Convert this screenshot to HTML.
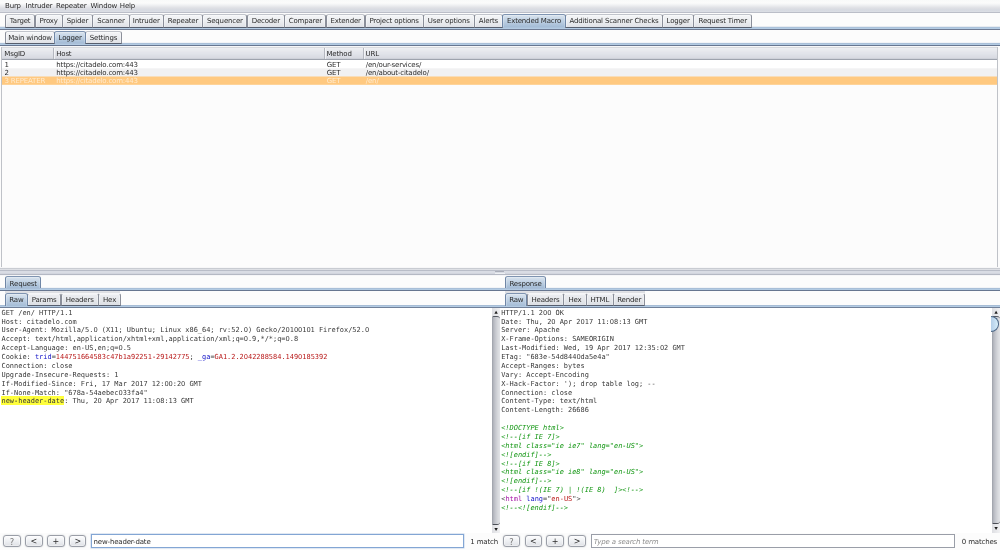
<!DOCTYPE html>
<html>
<head>
<meta charset="utf-8">
<title>Burp Suite</title>
<style>
html,body{margin:0;padding:0;}
body{width:1000px;height:550px;overflow:hidden;position:relative;background:#fcfcfc;
  font-family:"DejaVu Sans","Liberation Sans",sans-serif;font-size:7.0px;letter-spacing:-0.17px;color:#2b2b2b;}
*{box-sizing:border-box;}
.abs,#shapes div,#shapes svg{position:absolute;}
#shapes,#text{position:absolute;left:0;top:0;width:1000px;height:550px;overflow:hidden;}
#shapes{z-index:0;}
#text{will-change:transform;z-index:1;}
#text span.t{position:absolute;line-height:8px;white-space:nowrap;}
#text span.c{text-align:center;}
#menubar{left:0;top:0;width:1000px;height:12.8px;
  background:linear-gradient(#f8f9f9 0%,#fbfbfb 25%,#f0f1f3 42%,#dfe0e5 65%,#d6d9e1 84%,#dcdfe5 100%);border-bottom:0.8px solid #bbbec8;}
.tab{border:0.75px solid #8b8f9a;border-top-color:#c1c4cb;border-bottom:0.8px solid #565e6e;
  border-radius:2.6px 2.6px 0 0;
  background:linear-gradient(#f4f5f7 0%,#eceef1 50%,#dfe1e6 100%);
  box-shadow:inset 0.5px 0.6px 0 rgba(255,255,255,0.75),inset -0.5px 0 0 rgba(255,255,255,0.6);}
.tab.sel{background:linear-gradient(#dae4ee 0%,#c2d3e5 42%,#a4bcd6 100%);border-color:#6f86a6;border-top-color:#7f94b1;border-bottom:none;z-index:2;
  box-shadow:inset 0.5px 0.6px 0 rgba(255,255,255,0.45),inset -0.5px 0 0 rgba(255,255,255,0.35);}
.tab.r4:not(.sel){background:linear-gradient(#ecedf1 0%,#e6e8ec 50%,#dcdfe4 100%);border-top-color:#f6f6f8;}
.bline{left:0;width:1000px;height:2.9px;
  background:linear-gradient(#9aadc7 0,#a3b7d0 0.5px,#b0c7df 0.6px,#b8cde3 2.0px,#5c6a84 2.1px,#64728c 2.9px);}
#tbl{left:1.4px;top:46.8px;width:996.8px;height:221.7px;border:0.7px solid #b1b4bb;border-top-color:#c6c9cf;border-bottom-color:#cdd0d5;border-radius:1.2px;background:#fff;overflow:hidden;}
#thead{left:0;top:0;width:995.4px;height:12.4px;
  background:linear-gradient(#f3f4f7 0%,#e8eaee 50%,#d8dbe1 100%);border-bottom:0.7px solid #a3a7af;}
.th{top:0;height:11.7px;border-left:0.6px solid #b9bcc3;box-shadow:inset 0.6px 0 0 #f4f5f7;}
.tr{left:0;width:995.4px;height:8.2px;}
.pane{position:absolute;font-family:"DejaVu Sans Mono","Liberation Mono",monospace;
  font-size:6.94px;line-height:8.87px;letter-spacing:0;white-space:pre;overflow:hidden;color:#383838;}
.z{font-family:"DejaVu Sans","Liberation Sans",sans-serif;font-size:6.7px;display:inline-block;width:4.178px;text-align:center;line-height:8px;vertical-align:baseline;}
.b{color:#1414c8;} .r{color:#b81818;} .g{color:#129612;font-style:italic;} .m{color:#a513a5;}
.sb{width:8px;background:linear-gradient(90deg,#9a9da6 0,#aeb1b9 1px,#c2c4cb 3px,#d8dade 6px,#e2e3e7 8px);}
.sbtn{width:8px;background:linear-gradient(90deg,#dddee2,#f1f1f3);}
.btn{top:535px;height:12px;width:17.4px;border:1px solid #9a9ea7;border-radius:3px;
  background:linear-gradient(#fdfdfe 0%,#eef0f3 50%,#dfe1e6 100%);box-shadow:0 0 1.2px rgba(110,116,128,0.55),inset 0 0 0 0.6px rgba(255,255,255,0.7);}
.tf{top:534px;height:14.4px;background:#fff;border:0.7px solid #9a9ea8;}
</style>
</head>
<body>
<div id="shapes">
<div id="menubar"></div>
<div style="left:0px;top:26px;width:1000px;height:4px;background:linear-gradient(#e8ecf1 0px,#e8ecf1 1px,#abc2db 1px,#abc2db 2px,#b3cbe3 2px,#b3cbe3 3px,#6f7b93 3px,#6f7b93 4px);"></div>
<div class="tab" style="left:4.95px;top:14.30px;width:30.40px;height:13.30px"></div>
<div class="tab" style="left:34.65px;top:14.30px;width:27.95px;height:13.30px"></div>
<div class="tab" style="left:61.90px;top:14.30px;width:31.05px;height:13.30px"></div>
<div class="tab" style="left:92.25px;top:14.30px;width:37.30px;height:13.30px"></div>
<div class="tab" style="left:128.85px;top:14.30px;width:34.80px;height:13.30px"></div>
<div class="tab" style="left:162.95px;top:14.30px;width:40.10px;height:13.30px"></div>
<div class="tab" style="left:202.35px;top:14.30px;width:45.10px;height:13.30px"></div>
<div class="tab" style="left:246.75px;top:14.30px;width:38.20px;height:13.30px"></div>
<div class="tab" style="left:284.25px;top:14.30px;width:42.20px;height:13.30px"></div>
<div class="tab" style="left:325.75px;top:14.30px;width:39.70px;height:13.30px"></div>
<div class="tab" style="left:364.75px;top:14.30px;width:58.80px;height:13.30px"></div>
<div class="tab" style="left:422.85px;top:14.30px;width:51.80px;height:13.30px"></div>
<div class="tab" style="left:473.95px;top:14.30px;width:29.00px;height:13.30px"></div>
<div class="tab sel" style="left:502.25px;top:14.00px;width:63.60px;height:13.40px"></div>
<div class="tab" style="left:565.15px;top:14.30px;width:97.70px;height:13.30px"></div>
<div class="tab" style="left:662.15px;top:14.30px;width:32.00px;height:13.30px"></div>
<div class="tab" style="left:693.45px;top:14.30px;width:58.60px;height:13.30px"></div>
<div style="left:0px;top:42px;width:1000px;height:4px;background:linear-gradient(#f2f4f7 0px,#f2f4f7 1px,#a9bfd8 1px,#a9bfd8 2px,#b3cbe3 2px,#b3cbe3 3px,#677690 3px,#677690 4px);"></div>
<div class="tab" style="left:4.95px;top:31.20px;width:50.20px;height:12.50px"></div>
<div class="tab sel" style="left:54.45px;top:30.90px;width:31.35px;height:12.60px"></div>
<div class="tab" style="left:85.10px;top:31.20px;width:36.75px;height:12.50px"></div>
<div style="left:1px;top:47px;width:997px;height:221px;background:#fcfcfc;border-left:1px solid #bfc2c8;border-right:1px solid #bfc2c8"></div>
<div style="left:2px;top:46px;width:995px;height:39px;background:linear-gradient(#f7f7f8 0px,#f7f7f8 1px,#d8dade 1px,#d8dade 2px,#edeef2 2px,#edeef2 3px,#eaecf0 3px,#eaecf0 4px,#e8eaee 4px,#e8eaee 5px,#e6e7ec 5px,#e6e7ec 6px,#e3e5eb 6px,#e3e5eb 7px,#e2e4ea 7px,#e2e4ea 8px,#dfe2e8 8px,#dfe2e8 9px,#dddfe6 9px,#dddfe6 10px,#dbdde4 10px,#dbdde4 11px,#d9dbe2 11px,#d9dbe2 12px,#ced1d9 12px,#ced1d9 13px,#9ea3ad 13px,#9ea3ad 14px,#ffffff 14px,#ffffff 15px,#ffffff 15px,#ffffff 16px,#ffffff 16px,#ffffff 17px,#ffffff 17px,#ffffff 18px,#ffffff 18px,#ffffff 19px,#ffffff 19px,#ffffff 20px,#ffffff 20px,#ffffff 21px,#ffffff 21px,#ffffff 22px,#f5f5f6 22px,#f5f5f6 23px,#f1f1f2 23px,#f1f1f2 24px,#f1f1f2 24px,#f1f1f2 25px,#f1f1f2 25px,#f1f1f2 26px,#f1f1f2 26px,#f1f1f2 27px,#f1f1f2 27px,#f1f1f2 28px,#f1f1f2 28px,#f1f1f2 29px,#f1f1f2 29px,#f1f1f2 30px,#f8ddb9 30px,#f8ddb9 31px,#ffc980 31px,#ffc980 32px,#ffc980 32px,#ffc980 33px,#ffc980 33px,#ffc980 34px,#ffc980 34px,#ffc980 35px,#ffc980 35px,#ffc980 36px,#ffc980 36px,#ffc980 37px,#ffc980 37px,#ffc980 38px,#fed399 38px,#fed399 39px);"></div>
<div style="left:53px;top:48px;width:1px;height:11px;background:#b4b7bf"></div>
<div style="left:54px;top:48px;width:1px;height:11px;background:rgba(255,255,255,0.6)"></div>
<div style="left:324px;top:48px;width:1px;height:11px;background:#b4b7bf"></div>
<div style="left:325px;top:48px;width:1px;height:11px;background:rgba(255,255,255,0.6)"></div>
<div style="left:363px;top:48px;width:1px;height:11px;background:#b4b7bf"></div>
<div style="left:364px;top:48px;width:1px;height:11px;background:rgba(255,255,255,0.6)"></div>
<div style="left:0px;top:267px;width:1000px;height:9px;background:linear-gradient(#f7f7f8 0px,#f7f7f8 1px,#c9ccd2 1px,#c9ccd2 2px,#dee0e5 2px,#dee0e5 3px,#b9bdc8 3px,#b9bdc8 4px,#d9dce4 4px,#d9dce4 5px,#d9dce4 5px,#d9dce4 6px,#d2d5de 6px,#d2d5de 7px,#b5b9c4 7px,#b5b9c4 8px,#f6f6f8 8px,#f6f6f8 9px);"></div>
<div style="left:495.4px;top:271px;width:9px;height:1.4px;background:#a9adb8"></div>
<div style="left:495px;top:273px;width:10px;height:1px;background:#eef0f3"></div>
<div style="left:0px;top:287px;width:1000px;height:4px;background:linear-gradient(#f2f4f7 0px,#f2f4f7 1px,#a9bfd8 1px,#a9bfd8 2px,#b3cbe3 2px,#b3cbe3 3px,#677690 3px,#677690 4px);"></div>
<div class="tab sel" style="left:5.05px;top:276.40px;width:36.40px;height:12.10px"></div>
<div class="tab sel" style="left:505.05px;top:276.40px;width:41.10px;height:12.10px"></div>
<div style="left:0px;top:305px;width:1000px;height:4px;background:linear-gradient(#a6bcd5 0px,#a6bcd5 1px,#b3cbe3 1px,#b3cbe3 2px,#708099 2px,#708099 3px,#eceef0 3px,#eceef0 4px);"></div>
<div style="left:5px;top:291px;width:115px;height:3px;background:linear-gradient(#e0e1e5 0px,#e0e1e5 1px,#dddee2 1px,#dddee2 2px,#f3f3f4 2px,#f3f3f4 3px);"></div>
<div style="left:505px;top:291px;width:140px;height:3px;background:linear-gradient(#e0e1e5 0px,#e0e1e5 1px,#dddee2 1px,#dddee2 2px,#f3f3f4 2px,#f3f3f4 3px);"></div>
<div class="tab r4 sel" style="left:5.05px;top:293.00px;width:22.65px;height:12.60px"></div>
<div class="tab r4" style="left:27.00px;top:293.30px;width:34.35px;height:12.50px"></div>
<div class="tab r4" style="left:60.65px;top:293.30px;width:38.20px;height:12.50px"></div>
<div class="tab r4" style="left:98.15px;top:293.30px;width:22.90px;height:12.50px"></div>
<div class="tab r4 sel" style="left:505.05px;top:293.00px;width:22.40px;height:12.60px"></div>
<div class="tab r4" style="left:526.75px;top:293.30px;width:37.30px;height:12.50px"></div>
<div class="tab r4" style="left:563.35px;top:293.30px;width:23.30px;height:12.50px"></div>
<div class="tab r4" style="left:585.95px;top:293.30px;width:27.80px;height:12.50px"></div>
<div class="tab r4" style="left:613.05px;top:293.30px;width:32.30px;height:12.50px"></div>
<div style="left:0;top:307.8px;width:492.2px;height:225.2px;background:#fff"></div>
<div style="left:1.4px;top:396.2px;width:62.8px;height:8.8px;background:#ffff3c"></div>
<div class="sbtn" style="left:492.0px;top:307.9px;width:8.2px;height:8.2px"></div>
<div class="sbtn" style="left:492.0px;top:524.6px;width:8.2px;height:8.6px"></div>
<div class="sb" style="left:492.0px;top:316.09999999999997px;width:8.2px;height:208.50px;border-radius:1.5px 3px 3px 1.5px;border-top:0.9px solid #555962;border-bottom:1.2px solid #4a4d55"></div>
<svg style="left:492.0px;top:307.9px" width="8.2" height="8.2" viewBox="0 0 8.2 8.2"><path d="M2.4 5.8 L4.1 2.7 L5.8 5.8 Z" fill="#1e1e1e"/></svg>
<svg style="left:492.0px;top:524.6px" width="8.2" height="8.6" viewBox="0 0 8.2 8.6"><path d="M2.4 2.9 L5.8 2.9 L4.1 5.9 Z" fill="#1e1e1e"/></svg>
<div style="left:500px;top:307.8px;width:492px;height:225px;background:#fff"></div>
<div class="sbtn" style="left:991.8px;top:307.9px;width:8.2px;height:8.2px"></div>
<div class="sbtn" style="left:991.8px;top:524.0px;width:8.2px;height:8.6px"></div>
<div class="sb" style="left:991.8px;top:316.09999999999997px;width:8.2px;height:207.90px;border-radius:1.5px 3px 3px 1.5px;border-top:0.9px solid #555962;border-bottom:1.2px solid #4a4d55"></div>
<svg style="left:991.8px;top:307.9px" width="8.2" height="8.2" viewBox="0 0 8.2 8.2"><path d="M2.4 5.8 L4.1 2.7 L5.8 5.8 Z" fill="#1e1e1e"/></svg>
<svg style="left:991.8px;top:524.0px" width="8.2" height="8.6" viewBox="0 0 8.2 8.6"><path d="M2.4 2.9 L5.8 2.9 L4.1 5.9 Z" fill="#1e1e1e"/></svg>
<div style="left:991.1999999999999px;top:316.1px;width:8.299999999999999px;height:15.899999999999977px;border:0.8px solid #4b6686;border-left:none;border-radius:0 100% 100% 0 / 0 50% 50% 0;background:linear-gradient(90deg,#b5cfe8,#c4ddf1 50%,#d8eef9)"></div>
<div class="btn" style="left:3.30px"></div>
<div class="btn" style="left:25.20px"></div>
<div class="btn" style="left:47.15px"></div>
<div class="btn" style="left:69.10px"></div>
<div class="btn" style="left:502.60px"></div>
<div class="btn" style="left:524.50px"></div>
<div class="btn" style="left:546.45px"></div>
<div class="btn" style="left:568.40px"></div>
<div class="tf" style="left:91px;width:373px;border:1px solid #83a6d4;box-shadow:0 0 0 0.5px rgba(150,180,220,0.55)"></div>
<div class="tf" style="left:591px;width:363.5px"></div>
</div>
<div id="text">
<span class="t" style="left:5.00px;top:2px;">Burp</span>
<span class="t" style="left:25.50px;top:2px;">Intruder</span>
<span class="t" style="left:56.00px;top:2px;">Repeater</span>
<span class="t" style="left:90.50px;top:2px;">Window</span>
<span class="t" style="left:119.80px;top:2px;">Help</span>
<span class="t c" style="left:4.95px;top:17px;width:30.40px;">Target</span>
<span class="t c" style="left:34.65px;top:17px;width:27.95px;">Proxy</span>
<span class="t c" style="left:61.90px;top:17px;width:31.05px;">Spider</span>
<span class="t c" style="left:92.25px;top:17px;width:37.30px;">Scanner</span>
<span class="t c" style="left:128.85px;top:17px;width:34.80px;">Intruder</span>
<span class="t c" style="left:162.95px;top:17px;width:40.10px;">Repeater</span>
<span class="t c" style="left:202.35px;top:17px;width:45.10px;">Sequencer</span>
<span class="t c" style="left:246.75px;top:17px;width:38.20px;">Decoder</span>
<span class="t c" style="left:284.25px;top:17px;width:42.20px;">Comparer</span>
<span class="t c" style="left:325.75px;top:17px;width:39.70px;">Extender</span>
<span class="t c" style="left:364.75px;top:17px;width:58.80px;">Project options</span>
<span class="t c" style="left:422.85px;top:17px;width:51.80px;">User options</span>
<span class="t c" style="left:473.95px;top:17px;width:29.00px;">Alerts</span>
<span class="t c" style="left:502.25px;top:17px;width:63.60px;">Extended Macro</span>
<span class="t c" style="left:565.15px;top:17px;width:97.70px;">Additional Scanner Checks</span>
<span class="t c" style="left:662.15px;top:17px;width:32.00px;">Logger</span>
<span class="t c" style="left:693.45px;top:17px;width:58.60px;">Request Timer</span>
<span class="t c" style="left:4.95px;top:34px;width:50.20px;">Main window</span>
<span class="t c" style="left:54.45px;top:34px;width:31.35px;">Logger</span>
<span class="t c" style="left:85.10px;top:34px;width:36.75px;">Settings</span>
<span class="t" style="left:4.30px;top:50px;">MsgID</span>
<span class="t" style="left:56.20px;top:50px;">Host</span>
<span class="t" style="left:326.50px;top:50px;">Method</span>
<span class="t" style="left:365.50px;top:50px;">URL</span>
<span class="t" style="left:4.40px;top:61px;">1</span>
<span class="t" style="left:56.30px;top:61px;">https://citadelo.com:443</span>
<span class="t" style="left:326.80px;top:61px;">GET</span>
<span class="t" style="left:365.80px;top:61px;">/en/our-services/</span>
<span class="t" style="left:4.40px;top:69px;">2</span>
<span class="t" style="left:56.30px;top:69px;">https://citadelo.com:443</span>
<span class="t" style="left:326.80px;top:69px;">GET</span>
<span class="t" style="left:365.80px;top:69px;">/en/about-citadelo/</span>
<span class="t" style="left:4.40px;top:77px;color:#ffebcf;">3 REPEATER</span>
<span class="t" style="left:56.30px;top:77px;color:#ffebcf;">https://citadelo.com:443</span>
<span class="t" style="left:326.80px;top:77px;color:#ffebcf;">GET</span>
<span class="t" style="left:365.80px;top:77px;color:#ffebcf;">/en/</span>
<span class="t c" style="left:5.05px;top:280px;width:36.40px;">Request</span>
<span class="t c" style="left:505.05px;top:280px;width:41.10px;">Response</span>
<span class="t c" style="left:5.05px;top:296px;width:22.65px;">Raw</span>
<span class="t c" style="left:27.00px;top:296px;width:34.35px;">Params</span>
<span class="t c" style="left:60.65px;top:296px;width:38.20px;">Headers</span>
<span class="t c" style="left:98.15px;top:296px;width:22.90px;">Hex</span>
<span class="t c" style="left:505.05px;top:296px;width:22.40px;">Raw</span>
<span class="t c" style="left:526.75px;top:296px;width:37.30px;">Headers</span>
<span class="t c" style="left:563.35px;top:296px;width:23.30px;">Hex</span>
<span class="t c" style="left:585.95px;top:296px;width:27.80px;">HTML</span>
<span class="t c" style="left:613.05px;top:296px;width:32.30px;">Render</span>
<div class="pane" style="left:0;top:307.8px;width:492.2px;height:225.2px;padding:0.95px 0 0 1.5px">GET /en/ HTTP/1.1
Host: citadelo.com
User-Agent: Mozilla/5.<span class="z">0</span> (X11; Ubuntu; Linux x86_64; rv:52.<span class="z">0</span>) Gecko/2<span class="z">0</span>1<span class="z">0</span><span class="z">0</span>1<span class="z">0</span>1 Firefox/52.<span class="z">0</span>
Accept: text/html,application/xhtml+xml,application/xml;q=<span class="z">0</span>.9,*/*;q=<span class="z">0</span>.8
Accept-Language: en-US,en;q=<span class="z">0</span>.5
Cookie: <span class="b">trid</span>=<span class="r">144751664583c47b1a92251-29142775</span>; <span class="b">_ga</span>=<span class="r">GA1.2.2<span class="z">0</span>42288584.149<span class="z">0</span>185392</span>
Connection: close
Upgrade-Insecure-Requests: 1
If-Modified-Since: Fri, 17 Mar 2<span class="z">0</span>17 12:<span class="z">0</span><span class="z">0</span>:2<span class="z">0</span> GMT
If-None-Match: "678a-54aebec<span class="z">0</span>33fa4"
new-header-date: Thu, 2<span class="z">0</span> Apr 2<span class="z">0</span>17 11:<span class="z">0</span>8:13 GMT</div>
<div class="pane" style="left:500px;top:307.8px;width:492px;height:225px;padding:0.95px 0 0 1.2px">HTTP/1.1 2<span class="z">0</span><span class="z">0</span> OK
Date: Thu, 2<span class="z">0</span> Apr 2<span class="z">0</span>17 11:<span class="z">0</span>8:13 GMT
Server: Apache
X-Frame-Options: SAMEORIGIN
Last-Modified: Wed, 19 Apr 2<span class="z">0</span>17 12:35:<span class="z">0</span>2 GMT
ETag: "683e-54d844<span class="z">0</span>da5e4a"
Accept-Ranges: bytes
Vary: Accept-Encoding
X-Hack-Factor: '); drop table log; --
Connection: close
Content-Type: text/html
Content-Length: 26686

<span class="g">&lt;!DOCTYPE html&gt;</span>
<span class="g">&lt;!--[if IE 7]&gt;</span>
<span class="g">&lt;html class="ie ie7" lang="en-US"&gt;</span>
<span class="g">&lt;![endif]--&gt;</span>
<span class="g">&lt;!--[if IE 8]&gt;</span>
<span class="g">&lt;html class="ie ie8" lang="en-US"&gt;</span>
<span class="g">&lt;![endif]--&gt;</span>
<span class="g">&lt;!--[if !(IE 7) | !(IE 8)  ]&gt;&lt;!--&gt;</span>
&lt;<span class="m">html</span> <span class="b">lang</span>="<span class="r">en-US</span>"&gt;
<span class="g">&lt;!--&lt;![endif]--&gt;</span></div>
<span class="t c" style="left:3.30px;top:538px;width:17.40px;color:#787878;font-size:8.4px;">?</span>
<span class="t c" style="left:25.20px;top:538px;width:17.40px;font-size:8px;">&lt;</span>
<span class="t c" style="left:47.15px;top:538px;width:17.40px;font-size:8px;">+</span>
<span class="t c" style="left:69.10px;top:538px;width:17.40px;font-size:8px;">&gt;</span>
<span class="t c" style="left:502.60px;top:538px;width:17.40px;color:#787878;font-size:8.4px;">?</span>
<span class="t c" style="left:524.50px;top:538px;width:17.40px;font-size:8px;">&lt;</span>
<span class="t c" style="left:546.45px;top:538px;width:17.40px;font-size:8px;">+</span>
<span class="t c" style="left:568.40px;top:538px;width:17.40px;font-size:8px;">&gt;</span>
<span class="t" style="left:93.60px;top:538px;">new-header-date</span>
<span class="t" style="left:470.30px;top:538px;">1 match</span>
<span class="t" style="left:593.80px;top:538px;color:#8d8d8d;font-style:italic;">Type a search term</span>
<span class="t" style="left:961.80px;top:538px;">0 matches</span>
</div>
</body>
</html>
